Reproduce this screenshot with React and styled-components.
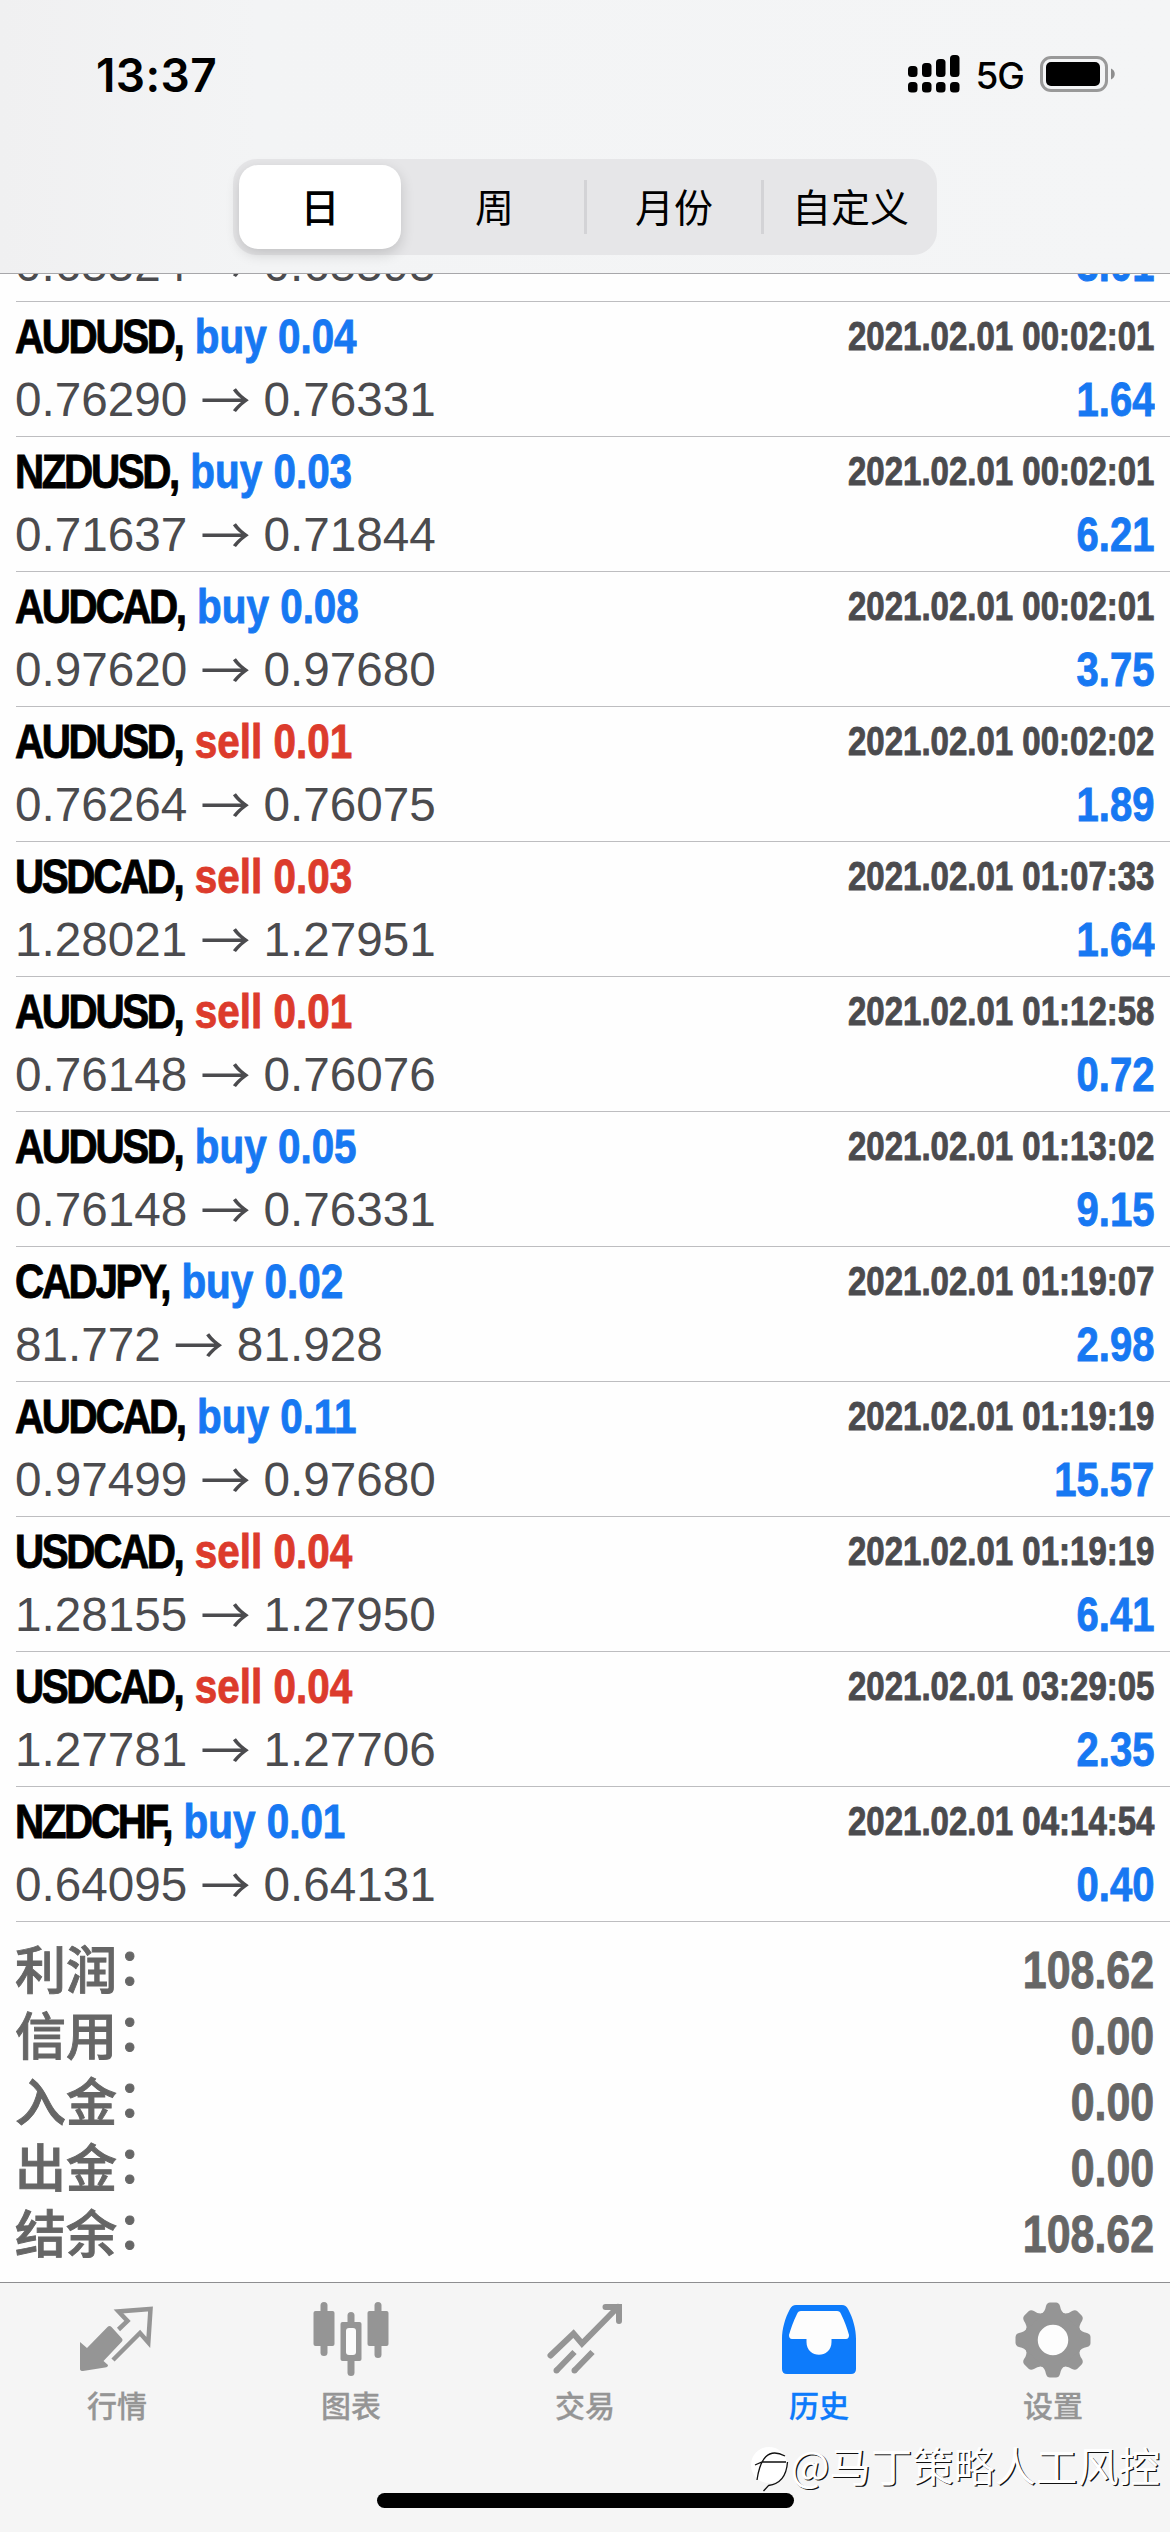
import React from "react";
import styled, { createGlobalStyle, css } from "styled-components";

const GlobalStyle = createGlobalStyle`
  * {
    box-sizing: border-box;
  }

  body {
    margin: 0;
    background: #fff;
    font-family: "Liberation Sans", "Noto Sans CJK SC", sans-serif;
  }
`;

// Bold sans squeezed to a condensed width
const condensed = css`
  display: block;
  font-family: "Liberation Sans", sans-serif;
  font-weight: 700;
  transform: scaleX(0.825);
  -webkit-text-stroke: 0.9px currentColor;
`;

const Screen = styled.div`
  position: relative;
  display: flex;
  flex-direction: column;
  width: 1170px;
  height: 2532px;
  background: #fefefe;
  overflow: hidden;
`;

const Header = styled.header`
  flex: none;
  height: 274px;
  background: linear-gradient(to right, #f0f0f1, #f3f4f5 22%, #f4f5f6);
  border-bottom: 1px solid #a7a7aa;
`;

const StatusBar = styled.div`
  display: flex;
  justify-content: space-between;
  align-items: center;
  height: 160px;
  padding: 0 54px 12px 96px;
`;

const Clock = styled.span`
  margin-top: 1px;
  font-family: "Inter", sans-serif;
  font-size: 46px;
  font-weight: 600;
  letter-spacing: 0.4px;
  color: #000;
`;

const StatusIcons = styled.div`
  display: flex;
  align-items: center;
`;

const Network = styled.span`
  margin: 3px 16px 0 15px;
  font-family: "Inter", sans-serif;
  font-size: 37px;
  font-weight: 500;
  letter-spacing: -1px;
`;

const Segmented = styled.div`
  display: flex;
  align-items: center;
  width: 704px;
  height: 96px;
  margin: -1px auto 0;
  padding: 6px 0 6px 6px;
  border-radius: 24px;
  background: #e6e6e8;
`;

const Segment = styled.button`
  flex: none;
  display: flex;
  align-items: center;
  justify-content: center;
  width: ${(props) => props.$width}px;
  height: ${(props) => (props.$active ? 84 : 54)}px;
  margin-right: ${(props) => (props.$active ? 4 : 0)}px;
  padding: 0 0 4px;
  border: none;
  border-left: ${(props) => (props.$divided ? "3px solid #d3d3d6" : "none")};
  border-radius: ${(props) => (props.$active ? 19 : 0)}px;
  background: ${(props) => (props.$active ? "#fff" : "transparent")};
  box-shadow: ${(props) =>
    props.$active ? "0 5px 14px rgba(0, 0, 0, 0.16)" : "none"};
  font-family: "Noto Sans CJK SC", sans-serif;
  font-size: 39px;
  font-weight: ${(props) => (props.$active ? 500 : 400)};
  line-height: 50px;
  color: #000;
`;

const History = styled.main`
  display: flex;
  flex-direction: column;
  flex: 1;
  min-height: 0;
  overflow: hidden;
`;

const Deal = styled.div`
  flex: none;
  display: flex;
  flex-direction: column;
  justify-content: flex-end;
  height: ${(props) => (props.$scrolled ? 28 : 135)}px;
  margin-left: 16px;
  padding: 0 16px 6px 0;
  border-bottom: 1px solid #bdbdc0;
  overflow: ${(props) => (props.$scrolled ? "hidden" : "visible")};
`;

const Line = styled.div`
  flex: none;
  display: flex;
  justify-content: space-between;
  align-items: center;
  height: ${(props) => props.$height}px;
  white-space: pre;
`;

const Title = styled.span`
  ${condensed}
  transform-origin: left center;
  margin-left: -1px;
  font-size: 49px;
`;

const Symbol = styled.span`
  letter-spacing: -2.9px;
  color: #000;
`;

const Side = styled.span`
  margin-left: 15px;
  color: ${(props) => (props.$side === "buy" ? "#1778f2" : "#dc3b2c")};
`;

const Time = styled.span`
  ${condensed}
  transform-origin: right center;
  font-size: 40px;
  color: #4b4b4e;
`;

const Prices = styled.span`
  display: flex;
  align-items: center;
  margin-left: -1px;
  font-size: 47.7px;
  color: #4b4b4e;
`;

const Arrow = styled.span`
  width: 76px;
  margin-top: -5px;
  text-align: center;
  font-family: "Noto Sans CJK SC", sans-serif;
  font-size: 50px;
  line-height: 56px;
`;

const Profit = styled.span`
  ${condensed}
  transform-origin: right center;
  font-size: 48.5px;
  color: #1778f2;
`;

const Summary = styled.section`
  flex: none;
  height: 360px;
  padding: 15px 16px 0 15px;
`;

const Total = styled.div`
  display: flex;
  justify-content: space-between;
  align-items: center;
  height: 66px;
  color: #666;
`;

const TotalLabel = styled.span`
  margin-top: -7px;
  font-family: "Noto Sans CJK SC", sans-serif;
  font-size: 51px;
  font-weight: 500;
  line-height: 66px;
  -webkit-text-stroke: 0.9px currentColor;
`;

const Colon = styled.span`
  position: relative;
  top: -4px;
`;

const TotalValue = styled.span`
  ${condensed}
  transform-origin: right center;
  font-size: 52px;
`;

const TabBar = styled.nav`
  flex: none;
  display: flex;
  height: 250px;
  border-top: 1px solid #8e8e90;
  background: #f5f5f5;
`;

const Tab = styled.button`
  display: flex;
  flex-direction: column;
  align-items: center;
  flex: 1;
  padding: 19px 0 0;
  border: none;
  background: none;
  color: ${(props) => (props.$active ? "#0d7bfb" : "#959595")};
`;

const TabLabel = styled.span`
  margin-top: 6px;
  font-family: "Noto Sans CJK SC", sans-serif;
  font-size: 30px;
  font-weight: 500;
  line-height: 40px;
  -webkit-text-stroke: 0.3px currentColor;
`;

const HomeIndicator = styled.div`
  position: absolute;
  left: 377px;
  bottom: 24px;
  width: 417px;
  height: 15px;
  border-radius: 8px;
  background: #000;
`;

const Watermark = styled.div`
  position: absolute;
  right: 10px;
  bottom: 37px;
  display: flex;
  align-items: flex-start;
  font-family: "Noto Sans CJK SC", sans-serif;
  font-size: 41.3px;
  line-height: 60px;
  color: #fff;
  text-shadow: 1.3px 1.3px 0.5px #111;

  svg {
    margin-top: 5px;
  }
`;

const Signal = () => (
  <svg width="52" height="38" viewBox="0 0 52 38">
    {[
      [0, 11, 11],
      [14, 8, 14],
      [28, 4, 18],
      [42, 0, 22],
    ].map(([x, y, height]) => (
      <g key={x}>
        <rect x={x} y={y} width="9.5" height={height} rx="3.5" />
        <rect x={x} y="27" width="9.5" height="10.5" rx="3.5" />
      </g>
    ))}
  </svg>
);

const Battery = () => (
  <svg width="76" height="36" viewBox="0 0 76 36">
    <rect
      x="1.5"
      y="1.5"
      width="65"
      height="33"
      rx="9.5"
      fill="none"
      stroke="#999"
      strokeWidth="3"
    />
    <rect x="6" y="6" width="54" height="24" rx="5" />
    <path d="M71 12.5c5 2 5 9 0 11z" fill="#8e8e8e" />
  </svg>
);

const QuotesIcon = () => (
  <svg width="76" height="76" viewBox="0 0 76 76">
    <path
      d="M1 40l7 6L28.500 25q2-2 4 0l10 11q2 2 0 4L24.500 59l4.500 4q0 2-3 2.500L4 69q-3 0-3-2z"
      fill="currentColor"
    />
    <path
      d="M39.500 27.500l9-8.500-9-9.500L71.500 7l-2.200 33.500L61 31 34 58"
      fill="none"
      stroke="currentColor"
      strokeWidth="4.5"
    />
  </svg>
);

const ChartIcon = () => (
  <svg width="76" height="76" viewBox="0 0 76 76" fill="currentColor">
    <rect x="0.5" y="9" width="21" height="35" rx="2" />
    <rect x="7.5" y="0" width="7" height="54" rx="3.5" />
    <rect x="54.5" y="9" width="21" height="35" rx="2" />
    <rect x="61.5" y="0" width="7" height="56" rx="3.5" />
    <rect x="34.5" y="10" width="7" height="64" rx="3.5" />
    <rect x="27.5" y="20" width="21" height="39" rx="2" />
    <rect x="33" y="26" width="10" height="27" rx="3" fill="#fbfbfb" />
  </svg>
);

const TradeIcon = () => (
  <svg
    width="76"
    height="76"
    viewBox="0 0 76 76"
    fill="none"
    stroke="currentColor"
    strokeWidth="6"
  >
    <path d="M3.500 53.500l23-22 8.500 10L71 5" strokeLinecap="round" />
    <path d="M58.500 5H72v14" strokeLinecap="round" />
    <path d="M10 68l17.500-18M28 68l17.500-18" />
    <circle cx="9.500" cy="68.500" r="3" fill="currentColor" stroke="none" />
    <circle cx="27.500" cy="68.500" r="3" fill="currentColor" stroke="none" />
  </svg>
);

const HistoryIcon = () => (
  <svg width="76" height="76" viewBox="0 0 76 76">
    <rect x="8" y="8" width="60" height="46" rx="12" fill="#fdfdfd" />
    <path
      fill="currentColor"
      fillRule="evenodd"
      d="M15 3h46q4 0 6 4c5 9 8 20 8 30v30q0 5-5 5H6q-5 0-5-5V37C1 27 4 16 9 7q2-4 6-4zm5 6q-3 0-4 3C12 20 10 26 8 33q0 4 3 4h14.500v3c0 17 25 17 25 0v-3h14.500q3 0 3-4c-2-7-4-13-8-21q-1-3-4-3z"
    />
  </svg>
);

const SettingsIcon = () => (
  <svg width="76" height="76" viewBox="0 0 76 76">
    <circle
      cx="38"
      cy="38"
      r="22"
      fill="#fdfdfd"
      stroke="currentColor"
      strokeWidth="13.5"
    />
    {[0, 45, 90, 135, 180, 225, 270, 315].map((angle) => (
      <path
        key={angle}
        d="M26 12q4-2 5-8 1-3.500 4-3.500h6q3 0 4 3.500 1 6 5 8z"
        fill="currentColor"
        transform={`rotate(${angle} 38 38)`}
      />
    ))}
  </svg>
);

const WatermarkLogo = () => (
  <svg width="41" height="56" viewBox="0 0 41 56">
    <circle cx="19" cy="26" r="18" fill="#fff" />
    <path
      d="M5 26l7-3h24M7 41C10 20 18 8 35 17M37.500 23c-1 14-8 22-19 23.500l-5 5.500"
      fill="none"
      stroke="#111"
      strokeWidth="1.3"
    />
  </svg>
);

const deals = [
  ["AUDUSD", "buy", "0.04", "0.76290", "0.76331", "2021.02.01 00:02:01", "1.64"],
  ["NZDUSD", "buy", "0.03", "0.71637", "0.71844", "2021.02.01 00:02:01", "6.21"],
  ["AUDCAD", "buy", "0.08", "0.97620", "0.97680", "2021.02.01 00:02:01", "3.75"],
  ["AUDUSD", "sell", "0.01", "0.76264", "0.76075", "2021.02.01 00:02:02", "1.89"],
  ["USDCAD", "sell", "0.03", "1.28021", "1.27951", "2021.02.01 01:07:33", "1.64"],
  ["AUDUSD", "sell", "0.01", "0.76148", "0.76076", "2021.02.01 01:12:58", "0.72"],
  ["AUDUSD", "buy", "0.05", "0.76148", "0.76331", "2021.02.01 01:13:02", "9.15"],
  ["CADJPY", "buy", "0.02", "81.772", "81.928", "2021.02.01 01:19:07", "2.98"],
  ["AUDCAD", "buy", "0.11", "0.97499", "0.97680", "2021.02.01 01:19:19", "15.57"],
  ["USDCAD", "sell", "0.04", "1.28155", "1.27950", "2021.02.01 01:19:19", "6.41"],
  ["USDCAD", "sell", "0.04", "1.27781", "1.27706", "2021.02.01 03:29:05", "2.35"],
  ["NZDCHF", "buy", "0.01", "0.64095", "0.64131", "2021.02.01 04:14:54", "0.40"],
];

const totals = [
  ["利润", "108.62"],
  ["信用", "0.00"],
  ["入金", "0.00"],
  ["出金", "0.00"],
  ["结余", "108.62"],
];

const tabs = [
  { label: "行情", Icon: QuotesIcon },
  { label: "图表", Icon: ChartIcon },
  { label: "交易", Icon: TradeIcon },
  { label: "历史", Icon: HistoryIcon, active: true },
  { label: "设置", Icon: SettingsIcon },
];

const PriceLine = ({ open, close, profit }) => (
  <Line $height={62}>
    <Prices>
      {open}
      <Arrow>→</Arrow>
      {close}
    </Prices>
    <Profit>{profit}</Profit>
  </Line>
);

const App = () => {
  return (
    <Screen>
      <GlobalStyle />
      <Header>
        <StatusBar>
          <Clock>13:37</Clock>
          <StatusIcons>
            <Signal />
            <Network>5G</Network>
            <Battery />
          </StatusIcons>
        </StatusBar>
        <Segmented>
          <Segment $width={162} $active>
            日
          </Segment>
          <Segment $width={179}>周</Segment>
          <Segment $width={177} $divided>
            月份
          </Segment>
          <Segment $width={176} $divided>
            自定义
          </Segment>
        </Segmented>
      </Header>
      <History>
        {/* mostly scrolled under the header */}
        <Deal $scrolled>
          <PriceLine open="0.65524" close="0.65595" profit="3.01" />
        </Deal>
        {deals.map(([symbol, side, volume, open, close, time, profit], index) => (
          <Deal key={index}>
            <Line $height={64}>
              <Title>
                <Symbol>{symbol},</Symbol>
                <Side $side={side}>
                  {side} {volume}
                </Side>
              </Title>
              <Time>{time}</Time>
            </Line>
            <PriceLine open={open} close={close} profit={profit} />
          </Deal>
        ))}
        <Summary>
          {totals.map(([label, value]) => (
            <Total key={label}>
              <TotalLabel>
                {label}
                <Colon>：</Colon>
              </TotalLabel>
              <TotalValue>{value}</TotalValue>
            </Total>
          ))}
        </Summary>
      </History>
      <TabBar>
        {tabs.map(({ label, Icon, active }) => (
          <Tab key={label} $active={active}>
            <Icon />
            <TabLabel>{label}</TabLabel>
          </Tab>
        ))}
      </TabBar>
      <HomeIndicator />
      <Watermark>
        <WatermarkLogo />
        @马丁策略人工风控
      </Watermark>
    </Screen>
  );
};

export default App;
